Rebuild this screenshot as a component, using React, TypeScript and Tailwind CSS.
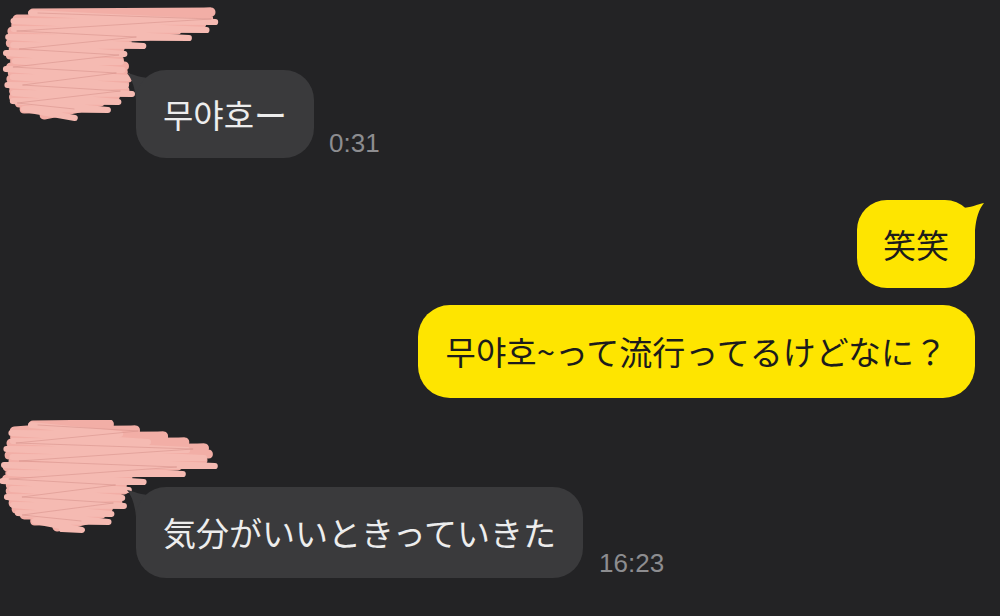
import React from "react";

type Pt = [number, number, number];

function interp(pts: Pt[], y: number): [number, number] {
  if (y <= pts[0][0]) return [pts[0][1], pts[0][2]];
  for (let i = 0; i < pts.length - 1; i++) {
    const a = pts[i];
    const b = pts[i + 1];
    if (y >= a[0] && y <= b[0]) {
      const t = (y - a[0]) / (b[0] - a[0]);
      return [a[1] + (b[1] - a[1]) * t, a[2] + (b[2] - a[2]) * t];
    }
  }
  const l = pts[pts.length - 1];
  return [l[1], l[2]];
}

function zig(pts: Pt[], step: number, slant: number, inset: number, wobble: number) {
  const y0 = pts[0][0];
  const y1 = pts[pts.length - 1][0];
  let d = "";
  let i = 0;
  for (let y = y0; y <= y1; y += step, i++) {
    const [l, r] = interp(pts, y);
    const even = i % 2 === 0;
    const w = Math.sin(i * 1.7) * wobble;
    const x = even ? l + inset + w : r - inset + w;
    const yy = y + (even ? 0 : slant);
    d += (i === 0 ? "M" : "L") + x.toFixed(1) + " " + yy.toFixed(1) + " ";
  }
  return d;
}

function Scribble({ pts, width, height }: { pts: Pt[]; width: number; height: number }) {
  return (
    <svg width={width} height={height} viewBox={`0 0 ${width} ${height}`}>
      <path d={zig(pts, 3, -4, 3, 2)} fill="none" stroke="#f2aea6" strokeWidth={9} strokeLinecap="round" strokeLinejoin="round" />
      <path d={zig(pts, 4, 5, 1, 4)} fill="none" stroke="#f5bab2" strokeWidth={6} strokeLinecap="round" strokeLinejoin="round" />
      <path d={zig(pts, 9, -3, 8, 6)} fill="none" stroke="#d8958e" strokeWidth={1} strokeOpacity={0.6} strokeLinecap="round" />
    </svg>
  );
}

const scribble1: Pt[] = [
  [13, 30, 110],
  [16, 16, 212],
  [24, 12, 214],
  [32, 10, 192],
  [40, 10, 150],
  [48, 8, 124],
  [60, 10, 122],
  [75, 8, 128],
  [90, 10, 130],
  [100, 12, 120],
  [108, 20, 96],
  [116, 42, 70],
];

const scribble2: Pt[] = [
  [5, 30, 90],
  [10, 12, 124],
  [20, 10, 165],
  [30, 8, 205],
  [42, 8, 215],
  [50, 5, 180],
  [60, 5, 130],
  [72, 8, 126],
  [85, 10, 120],
  [95, 20, 110],
  [104, 40, 90],
  [109, 60, 75],
];

function LeftTail({ color }: { color: string }) {
  return (
    <svg className="absolute left-[-10px] top-0" width={30} height={32} viewBox="-10 0 30 32">
      <path d="M0 30 C-1 18 -4 9 -9 3 C-3 4 5 8 13 8 L13 30 Z" fill={color} />
    </svg>
  );
}

function RightTail({ color }: { color: string }) {
  return (
    <svg className="absolute right-[-10px] top-0" width={30} height={32} viewBox="-20 0 30 32">
      <path d="M0 30 C1 18 4 9 9 3 C3 4 -5 8 -13 8 L-13 30 Z" fill={color} />
    </svg>
  );
}

const cjk = "font-['Noto_Sans_CJK_JP','Noto_Sans_CJK_KR',sans-serif]";
const timeCls =
  "font-['Liberation_Sans',Arial,sans-serif] text-[26px] leading-none text-[#8d8d90]";

export default function App() {
  return (
    <div className="w-[1000px] h-[616px] bg-[#232325] overflow-hidden flex flex-col">
      {/* incoming 1 */}
      <div className="relative pt-[70px] pl-[136px]">
        <div className="absolute left-0 top-0">
          <Scribble pts={scribble1} width={222} height={124} />
        </div>
        <div className="flex items-end">
          <div className="relative">
            <LeftTail color="#3a3a3c" />
            <div
              className={`relative h-[88px] rounded-[30px] bg-[#3a3a3c] px-[27px] flex items-center text-[33px] leading-none text-[#ededed] ${cjk}`}
            >
              무야호ー
            </div>
          </div>
          <span className={`ml-[15px] mb-[2px] ${timeCls}`}>0:31</span>
        </div>
      </div>

      {/* outgoing */}
      <div className="mt-[42px] pr-[25px] flex flex-col items-end">
        <div className="relative">
          <RightTail color="#fee500" />
          <div
            className={`relative h-[88px] rounded-[30px] bg-[#fee500] px-[26px] flex items-center text-[33px] leading-none text-[#1c1c1c] ${cjk}`}
          >
            笑笑
          </div>
        </div>
        <div
          className={`mt-[17px] h-[93px] rounded-[32px] bg-[#fee500] px-[28px] flex items-center text-[33px] leading-none text-[#1c1c1c] ${cjk}`}
        >
          무야호~って流行ってるけどなに？
        </div>
      </div>

      {/* incoming 2 */}
      <div className="relative mt-[89px] pl-[136px]">
        <div className="absolute left-0 top-[-67px]">
          <Scribble pts={scribble2} width={222} height={114} />
        </div>
        <div className="flex items-end">
          <div className="relative">
            <LeftTail color="#3a3a3c" />
            <div
              className={`relative h-[91px] rounded-[30px] bg-[#3a3a3c] px-[27px] flex items-center text-[33px] leading-none text-[#ededed] ${cjk}`}
            >
              気分がいいときっていきた
            </div>
          </div>
          <span className={`ml-[16px] mb-[2px] ${timeCls}`}>16:23</span>
        </div>
      </div>
    </div>
  );
}
